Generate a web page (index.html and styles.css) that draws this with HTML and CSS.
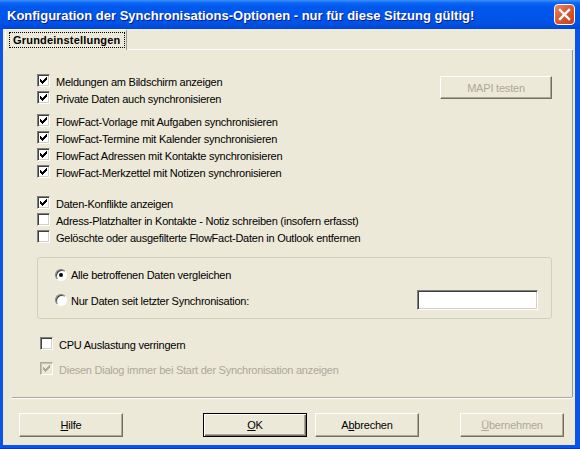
FILE: index.html
```html
<!DOCTYPE html>
<html lang="de">
<head>
    <meta charset="UTF-8">
    <title>Konfiguration der Synchronisations-Optionen</title>
    <link rel="stylesheet" href="styles.css">
</head>
<body>
    <div class="window">
        <div class="titlebar">
            <span class="title">Konfiguration der Synchronisations-Optionen - nur für diese Sitzung gültig!</span>
            <span class="close">
                <svg width="19" height="19" viewBox="0 0 19 19"><path d="M5 5 L14 14 M14 5 L5 14" stroke="#fff" stroke-width="2.4" stroke-linecap="square"/></svg>
            </span>
        </div>

        <div class="client">
            <div class="tabstrip">
                <div class="tab"><span class="focus">Grundeinstellungen</span></div>
                <div class="tabfill"></div>
            </div>

            <div class="panel">
                <div class="top-group">
                    <div class="rows">
                        <label class="check"><span class="box"><svg viewBox="0 0 7 7" width="7" height="7"><path d="M0 2h1v3H0zM1 3h1v3H1zM2 4h1v3H2zM3 3h1v3H3zM4 2h1v3H4zM5 1h1v3H5zM6 0h1v3H6z"/></svg></span><span class="text">Meldungen am Bildschirm anzeigen</span></label>
                        <label class="check"><span class="box"><svg viewBox="0 0 7 7" width="7" height="7"><path d="M0 2h1v3H0zM1 3h1v3H1zM2 4h1v3H2zM3 3h1v3H3zM4 2h1v3H4zM5 1h1v3H5zM6 0h1v3H6z"/></svg></span><span class="text">Private Daten auch synchronisieren</span></label>
                    </div>
                    <button class="btn mapi" disabled>MAPI testen</button>
                </div>

                <div class="rows group2">
                    <label class="check"><span class="box"><svg viewBox="0 0 7 7" width="7" height="7"><path d="M0 2h1v3H0zM1 3h1v3H1zM2 4h1v3H2zM3 3h1v3H3zM4 2h1v3H4zM5 1h1v3H5zM6 0h1v3H6z"/></svg></span><span class="text">FlowFact-Vorlage mit Aufgaben synchronisieren</span></label>
                    <label class="check"><span class="box"><svg viewBox="0 0 7 7" width="7" height="7"><path d="M0 2h1v3H0zM1 3h1v3H1zM2 4h1v3H2zM3 3h1v3H3zM4 2h1v3H4zM5 1h1v3H5zM6 0h1v3H6z"/></svg></span><span class="text">FlowFact-Termine mit Kalender synchronisieren</span></label>
                    <label class="check"><span class="box"><svg viewBox="0 0 7 7" width="7" height="7"><path d="M0 2h1v3H0zM1 3h1v3H1zM2 4h1v3H2zM3 3h1v3H3zM4 2h1v3H4zM5 1h1v3H5zM6 0h1v3H6z"/></svg></span><span class="text">FlowFact Adressen mit Kontakte synchronisieren</span></label>
                    <label class="check"><span class="box"><svg viewBox="0 0 7 7" width="7" height="7"><path d="M0 2h1v3H0zM1 3h1v3H1zM2 4h1v3H2zM3 3h1v3H3zM4 2h1v3H4zM5 1h1v3H5zM6 0h1v3H6z"/></svg></span><span class="text">FlowFact-Merkzettel mit Notizen synchronisieren</span></label>
                </div>

                <div class="rows group3">
                    <label class="check"><span class="box"><svg viewBox="0 0 7 7" width="7" height="7"><path d="M0 2h1v3H0zM1 3h1v3H1zM2 4h1v3H2zM3 3h1v3H3zM4 2h1v3H4zM5 1h1v3H5zM6 0h1v3H6z"/></svg></span><span class="text">Daten-Konflikte anzeigen</span></label>
                    <label class="check"><span class="box"></span><span class="text">Adress-Platzhalter in Kontakte - Notiz schreiben (insofern erfasst)</span></label>
                    <label class="check"><span class="box"></span><span class="text">Gelöschte oder ausgefilterte FlowFact-Daten in Outlook entfernen</span></label>
                </div>

                <div class="groupbox">
                    <label class="radio-row"><span class="radio on"></span><span class="text">Alle betroffenen Daten vergleichen</span></label>
                    <div class="radio-line">
                        <label class="radio-row"><span class="radio"></span><span class="text">Nur Daten seit letzter Synchronisation:</span></label>
                        <input class="field" type="text">
                    </div>
                </div>

                <div class="rows group4">
                    <label class="check"><span class="box"></span><span class="text">CPU Auslastung verringern</span></label>
                    <label class="check disabled"><span class="box"><svg viewBox="0 0 7 7" width="7" height="7"><path d="M0 2h1v3H0zM1 3h1v3H1zM2 4h1v3H2zM3 3h1v3H3zM4 2h1v3H4zM5 1h1v3H5zM6 0h1v3H6z"/></svg></span><span class="text">Diesen Dialog immer bei Start der Synchronisation anzeigen</span></label>
                </div>
            </div>

            <div class="separator"></div>

            <div class="footer">
                <button class="btn"><u>H</u>ilfe</button>
                <button class="btn default ok"><u>O</u>K</button>
                <button class="btn cancel">A<u>b</u>brechen</button>
                <button class="btn apply" disabled><u>Ü</u>bernehmen</button>
            </div>
        </div>
    </div>
</body>
</html>
```

FILE: styles.css
```css
body {
    margin: 0;
    font-family: "Liberation Sans", Arial, sans-serif;
    font-size: 11px;
    color: #000;
    background-color: #0a53e0;
}

.window {
    width: 580px;
    height: 449px;
    display: flex;
    flex-direction: column;
    background-color: #0a55e6;
    box-sizing: border-box;
    border-bottom: 1px solid #0831d9;
}

/* Title bar */
.titlebar {
    height: 29px;
    flex-shrink: 0;
    display: flex;
    align-items: center;
    padding: 0 5px 0 7px;
    background: linear-gradient(#3d8ffc 0, #0a66f2 3px, #0058ee 7px, #0055ea 50%, #0052e5 80%, #0046d8 100%);
}

.title {
    flex: 1;
    padding-top: 2px;
    color: #fff;
    font-weight: bold;
    font-size: 13px;
    text-shadow: 1px 1px #0a1e8a;
    white-space: nowrap;
}

.close {
    width: 21px;
    height: 21px;
    box-sizing: border-box;
    display: flex;
    align-items: center;
    justify-content: center;
    border: 1px solid #fff;
    border-radius: 4px;
    background: linear-gradient(135deg, #ec8a6a 0, #dc5a35 45%, #c2401c 100%);
}

/* Client area */
.client {
    flex: 1;
    margin: 0 5px 3px 3px;
    background-color: #ece9d8;
    display: flex;
    flex-direction: column;
}

.tabstrip {
    display: flex;
    height: 21px;
    flex-shrink: 0;
}

.tab {
    margin-left: 2px;
    width: 122px;
    box-sizing: border-box;
    border-top: 1px solid #fff;
    border-left: 1px solid #fff;
    border-right: 1px solid #919b9c;
    border-radius: 2px 2px 0 0;
    padding: 2px 0 0 3px;
}

.focus {
    display: inline-block;
    border: 1px dotted #000;
    padding: 1px 3px 1px 3px;
    font-weight: bold;
    letter-spacing: 0.2px;
}

.tabfill {
    flex: 1;
    border-bottom: 1px solid #fff;
    margin-right: 2px;
}

.panel {
    height: 347px;
    flex-shrink: 0;
    box-sizing: border-box;
    margin-right: 2px;
    border-right: 1px solid #919b9c;
    padding: 22px 0 0 34px;
}

.top-group {
    display: flex;
}

.rows {
    display: flex;
    flex-direction: column;
}

.group2 {
    margin-top: 6px;
}

.group3 {
    margin-top: 14px;
}

.check {
    height: 17px;
    display: flex;
    align-items: flex-start;
    white-space: nowrap;
}

.check .text {
    padding: 2px 0 0 6px;
    line-height: 17px;
    letter-spacing: -0.25px;
}

.box {
    width: 13px;
    height: 13px;
    margin-top: 2px;
    box-sizing: border-box;
    display: flex;
    align-items: center;
    justify-content: center;
    background-color: #fff;
    border: 1px solid;
    border-color: #808080 #fff #fff #808080;
    box-shadow: inset 1px 1px #404040, inset -1px -1px #d4d0c8;
    flex-shrink: 0;
}

.box svg {
    fill: #000;
}

.disabled {
    color: #aca899;
}

.disabled .box {
    background-color: #ece9d8;
    border-color: #aca899 #fff #fff #aca899;
    box-shadow: inset 1px 1px #c5c2b2;
}

.disabled .box svg {
    fill: #aca899;
}

/* Buttons */
.btn {
    width: 104px;
    height: 24px;
    padding: 0;
    font-family: inherit;
    font-size: 11px;
    letter-spacing: -0.2px;
    color: #000;
    background-color: #ece9d8;
    border: 1px solid;
    border-color: #fff #716f64 #716f64 #fff;
    box-shadow: inset -1px -1px #aca899;
}

.btn:disabled {
    color: #aca899;
}

.btn.default {
    border-color: #000;
    box-shadow: inset 1px 1px #fff, inset -1px -1px #716f64, inset -2px -2px #aca899;
}

.mapi {
    width: 112px;
    height: 23px;
    margin: 4px 20px 0 auto;
}

/* Group box with radios */
.groupbox {
    margin-top: 12px;
    width: 515px;
    height: 62px;
    box-sizing: border-box;
    border: 1px solid #d0d0bf;
    border-radius: 3px;
    padding: 8px 0 0 17px;
}

.radio-line {
    display: flex;
    align-items: center;
    margin-top: 7px;
}

.radio-row {
    display: flex;
    align-items: center;
    height: 17px;
    white-space: nowrap;
}

.radio-row .text {
    padding: 1px 0 0 4px;
    letter-spacing: -0.25px;
}

.radio {
    width: 12px;
    height: 12px;
    box-sizing: border-box;
    border-radius: 50%;
    border: 1px solid;
    border-color: #808080 #fff #fff #808080;
    background-color: #fff;
    box-shadow: inset 1px 1px #404040;
    display: flex;
    align-items: center;
    justify-content: center;
}

.radio.on::after {
    content: "";
    width: 4px;
    height: 4px;
    border-radius: 50%;
    background-color: #000;
}

.field {
    margin-left: auto;
    margin-right: 13px;
    width: 121px;
    height: 20px;
    box-sizing: border-box;
    padding: 0;
    background-color: #fff;
    border: 1px solid;
    border-color: #808080 #fff #fff #808080;
    box-shadow: inset 1px 1px #404040, inset -1px -1px #d4d0c8;
}

.group4 {
    margin-top: 16px;
    margin-left: 3px;
}

.group4 .check + .check {
    margin-top: 8px;
}

/* Footer */
.separator {
    margin: 0 3px 0 9px;
    border-top: 1px solid #aca899;
    border-bottom: 1px solid #fff;
}

.footer {
    display: flex;
    padding: 14px 0 0 16px;
}

.ok {
    margin-left: 80px;
}

.cancel {
    margin-left: 8px;
}

.apply {
    margin-left: 41px;
}
```
